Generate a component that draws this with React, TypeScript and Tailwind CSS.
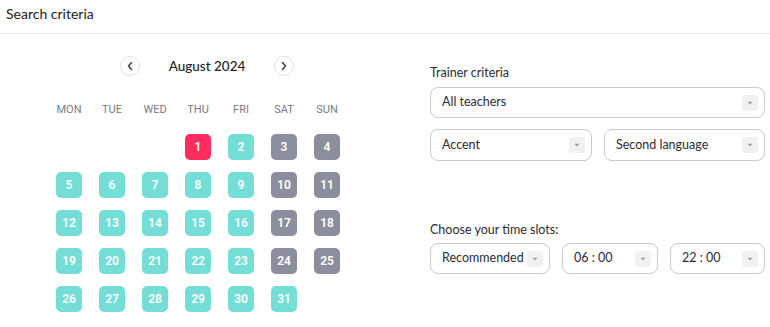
import React from "react";

const teal = "bg-[#74ddd6]";
const gray = "bg-[#8b8e9c]";
const pink = "bg-[#ff2d5f]";

function Arrow() {
  return (
    <span className="flex h-[16px] w-[16px] items-center justify-center rounded-[3px] bg-[#f1f1f4]">
      <svg width="6" height="4" viewBox="0 0 6 4">
        <path d="M0.5 0.8 L5.5 0.8 L3 3.4 Z" fill="#9a9aa6" />
      </svg>
    </span>
  );
}

function Select({ label, className }: { label: string; className: string }) {
  return (
    <div
      className={`flex items-center justify-between rounded-[8px] border border-[#c9c9d2] pl-[11px] pr-[6px] text-[12.5px] text-[#2b2b33] ${className}`}
    >
      <span>{label}</span>
      <Arrow />
    </div>
  );
}

function NavBtn({ dir }: { dir: "l" | "r" }) {
  return (
    <button className="flex h-[20px] w-[20px] items-center justify-center rounded-full border border-[#e3e3e6] bg-white">
      <svg width="8" height="10" viewBox="0 0 8 10">
        {dir === "l" ? (
          <path d="M5.5 1.5 L2.5 5 L5.5 8.5" fill="none" stroke="#444" strokeWidth="1.6" strokeLinecap="round" strokeLinejoin="round" />
        ) : (
          <path d="M2.5 1.5 L5.5 5 L2.5 8.5" fill="none" stroke="#444" strokeWidth="1.6" strokeLinecap="round" strokeLinejoin="round" />
        )}
      </svg>
    </button>
  );
}

export default function App() {
  const days: (number | null)[] = [null, null, null];
  for (let d = 1; d <= 31; d++) days.push(d);
  const colorFor = (d: number, idx: number) => {
    if (d === 1) return pink;
    const col = idx % 7;
    if (col >= 5 && d !== 31) return gray;
    return teal;
  };
  return (
    <div className="h-[327px] w-[770px] overflow-hidden bg-white font-['Lato',sans-serif] text-[#222]">
      <div className="flex h-[34px] items-center border-b border-[#e8e8ea] px-[6px] pb-[6px] text-[14px] text-[#222]">
        Search criteria
      </div>
      <div className="flex">
        <div className="w-[430px] pl-[56px]">
          <div className="ml-[64px] mt-[22px] flex h-[20px] w-[174px] items-center justify-between">
            <NavBtn dir="l" />
            <span className="text-[13.5px] font-medium text-[#222]">August 2024</span>
            <NavBtn dir="r" />
          </div>
          <div className="mt-[27px] grid grid-cols-[repeat(7,26px)] gap-x-[17px] font-['Roboto',sans-serif] text-[11px] font-normal text-[#787b87]">
            {["MON", "TUE", "WED", "THU", "FRI", "SAT", "SUN"].map((d) => (
              <div key={d} className="flex h-[14px] items-center justify-center whitespace-nowrap">
                {d}
              </div>
            ))}
          </div>
          <div className="mt-[17px] grid grid-cols-[repeat(7,26px)] gap-x-[17px] gap-y-[12px] font-['Roboto',sans-serif] text-[12px] font-semibold text-white">
            {days.map((d, i) =>
              d === null ? (
                <div key={`e${i}`} className="h-[26px]" />
              ) : (
                <div
                  key={d}
                  className={`flex h-[26px] w-[26px] items-center justify-center rounded-[5px] ${colorFor(d, i)}`}
                >
                  {d}
                </div>
              )
            )}
          </div>
        </div>
        <div className="flex w-[335px] flex-col">
          <div className="mt-[32px] h-[14px] text-[12.5px] leading-[14px] text-[#2b2b33]">Trainer criteria</div>
          <Select label="All teachers" className="mt-[7px] h-[31px] w-[335px]" />
          <div className="mt-[11px] flex gap-[12px]">
            <Select label="Accent" className="h-[32px] w-[162px]" />
            <Select label="Second language" className="h-[32px] w-[161px]" />
          </div>
          <div className="mt-[62px] h-[14px] text-[12.5px] leading-[14px] text-[#2b2b33]">Choose your time slots:</div>
          <div className="mt-[6px] flex gap-[12px]">
            <Select label="Recommended" className="h-[31px] w-[120px]" />
            <Select label="06 : 00" className="h-[31px] w-[96px]" />
            <Select label="22 : 00" className="h-[31px] w-[95px]" />
          </div>
        </div>
      </div>
    </div>
  );
}
